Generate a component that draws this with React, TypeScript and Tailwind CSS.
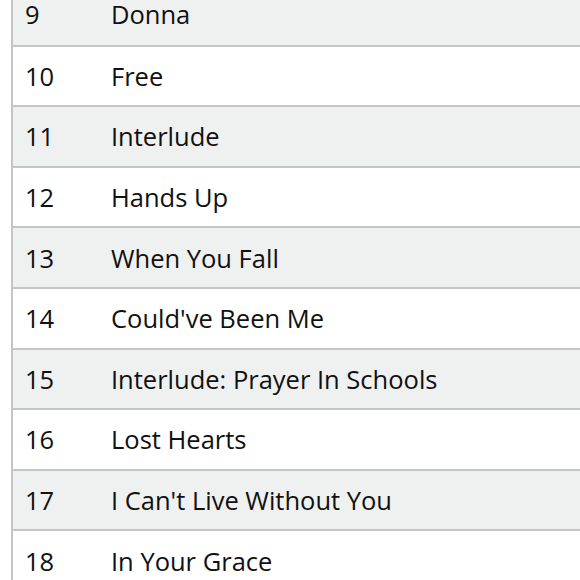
import React from "react";

const rows: [string, string][] = [
  ["9", "Donna"],
  ["10", "Free"],
  ["11", "Interlude"],
  ["12", "Hands Up"],
  ["13", "When You Fall"],
  ["14", "Could've Been Me"],
  ["15", "Interlude: Prayer In Schools"],
  ["16", "Lost Hearts"],
  ["17", "I Can't Live Without You"],
  ["18", "In Your Grace"],
];

export default function App() {
  return (
    <div className="w-[580px] h-[580px] overflow-hidden bg-white" style={{ fontFamily: '"Open Sans", "Noto Sans", sans-serif' }}>
      <div className="ml-[11px] mt-[-16px] border-l-2 border-[#c4c6c6]">
        {rows.map(([n, t], i) => (
          <div
            key={n}
            className={`flex items-center h-[60.6px] ${i > 0 ? "border-t-2 border-[#c4c6c6]" : ""} ${i % 2 === 0 ? "bg-[#eff0f0]" : "bg-white"}`}
          >
            <div className="w-[98px] shrink-0 pl-[12px] text-[25.5px] text-[#111111]">{n}</div>
            <div className="text-[25.5px] text-[#111111]">{t}</div>
          </div>
        ))}
      </div>
    </div>
  );
}
